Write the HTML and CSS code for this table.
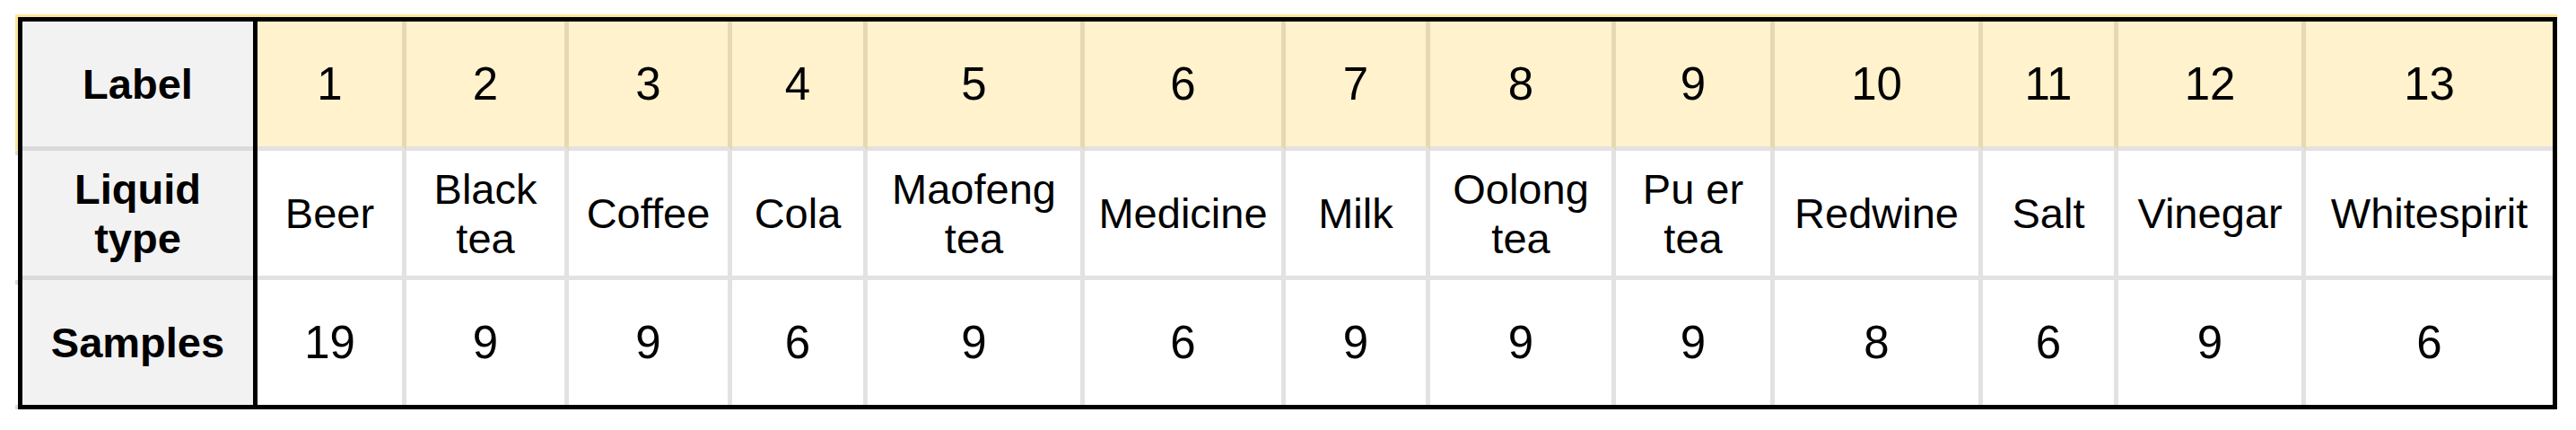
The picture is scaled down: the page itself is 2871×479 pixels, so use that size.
FILE: index.html
```html
<!DOCTYPE html>
<html lang="en">
<head>
<meta charset="utf-8">
<title>Liquid samples</title>
<link rel="stylesheet" href="styles.css">
</head>
<body>
<div class="frame">
  <div class="edge-top"></div>
  <div class="frame-body">
    <div class="edge-left">
      <div class="edge-head"></div>
      <div class="edge-line"></div>
      <div class="edge-gap"></div>
      <div class="edge-line"></div>
      <div class="edge-gap"></div>
      <div class="edge-foot"></div>
    </div>
    <div class="sheet">
      <div class="labels">
        <div class="label r1">Label</div>
        <div class="label r2">Liquid type</div>
        <div class="label r3">Samples</div>
      </div>
      <div class="data">
        <div class="cell head num">1</div>
        <div class="cell head num">2</div>
        <div class="cell head num">3</div>
        <div class="cell head num">4</div>
        <div class="cell head num">5</div>
        <div class="cell head num">6</div>
        <div class="cell head num">7</div>
        <div class="cell head num">8</div>
        <div class="cell head num">9</div>
        <div class="cell head num">10</div>
        <div class="cell head num">11</div>
        <div class="cell head num">12</div>
        <div class="cell head num last">13</div>

        <div class="cell">Beer</div>
        <div class="cell">Black tea</div>
        <div class="cell">Coffee</div>
        <div class="cell">Cola</div>
        <div class="cell">Maofeng tea</div>
        <div class="cell">Medicine</div>
        <div class="cell">Milk</div>
        <div class="cell">Oolong tea</div>
        <div class="cell">Pu er tea</div>
        <div class="cell">Redwine</div>
        <div class="cell">Salt</div>
        <div class="cell">Vinegar</div>
        <div class="cell last">Whitespirit</div>

        <div class="cell num bottom">19</div>
        <div class="cell num bottom">9</div>
        <div class="cell num bottom">9</div>
        <div class="cell num bottom">6</div>
        <div class="cell num bottom">9</div>
        <div class="cell num bottom">6</div>
        <div class="cell num bottom">9</div>
        <div class="cell num bottom">9</div>
        <div class="cell num bottom">9</div>
        <div class="cell num bottom">8</div>
        <div class="cell num bottom">6</div>
        <div class="cell num bottom">9</div>
        <div class="cell num bottom last">6</div>
      </div>
    </div>
  </div>
</div>
</body>
</html>
```

FILE: styles.css
```css
* {
  box-sizing: border-box;
}

html, body {
  margin: 0;
  padding: 0;
  background: #ffffff;
}

body {
  font-family: "Liberation Sans", Arial, sans-serif;
  color: #000000;
}

.frame {
  margin: 16px 0 0 17px;
  width: 2833px;
  display: flex;
  flex-direction: column;
}

.edge-top {
  height: 3px;
  background: #ffe599;
}

.frame-body {
  display: flex;
}

.edge-left {
  width: 3px;
  display: flex;
  flex-direction: column;
}

.edge-head {
  height: 149px;
  background: #ffe599;
}

.edge-line {
  height: 5px;
  background: #dcdcdc;
}

.edge-gap {
  height: 139px;
}

.edge-foot {
  height: 5px;
  margin-top: -5px;
  background: #d5e3d0;
}

.sheet {
  display: flex;
  border: 5px solid #000000;
  width: 2830px;
  height: 437px;
}

.labels {
  width: 262px;
  border-right: 5px solid #000000;
  background: #f2f2f2;
  display: grid;
  grid-template-rows: 144px 144px 139px;
}

.label {
  display: flex;
  align-items: center;
  justify-content: center;
  text-align: center;
  font-weight: bold;
  font-size: 47px;
  line-height: 55px;
  padding: 0 8px;
}

.label.r1,
.label.r2 {
  border-bottom: 5px solid #dadada;
}

.data {
  flex: 1;
  display: grid;
  grid-template-columns: 166px 181px 182px 151px 242px 224px 161px 207px 177px 232px 151px 209px 275px;
  grid-template-rows: 144px 144px 139px;
}

.cell {
  display: flex;
  align-items: center;
  justify-content: center;
  text-align: center;
  font-size: 47px;
  line-height: 55px;
  padding: 0 8px;
  background: #ffffff;
  border-right: 5px solid #e2e2e2;
  border-bottom: 5px solid #e2e2e2;
}

.cell.head {
  background: #fff2cc;
  border-right-color: #e5d8b4;
}

.cell.num {
  font-size: 51px;
}

.cell.last {
  border-right: none;
}

.cell.bottom {
  border-bottom: none;
}
```
